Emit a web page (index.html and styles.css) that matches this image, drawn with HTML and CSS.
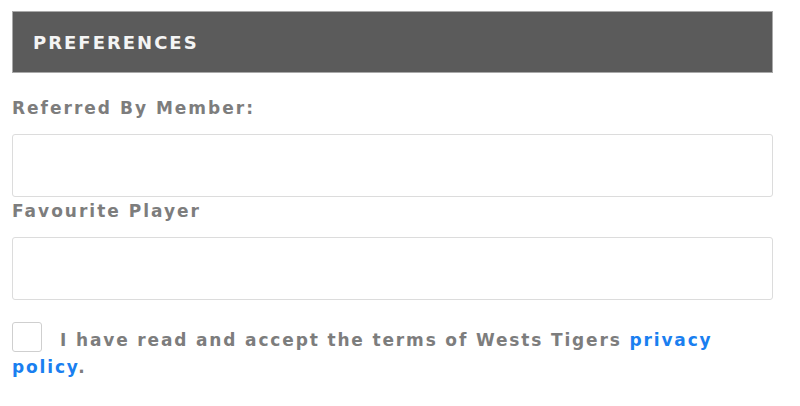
FILE: index.html
```html
<!DOCTYPE html>
<html>
<head>
<meta charset="utf-8">
<link rel="stylesheet" href="styles.css">
</head>
<body>
<div class="panel">
  <div class="panel-head">PREFERENCES</div>
  <div class="field">
    <label class="label">Referred By Member:</label>
    <div class="input"></div>
  </div>
  <div class="field field-tight">
    <label class="label">Favourite Player</label>
    <div class="input"></div>
  </div>
  <div class="agree">
    <span class="checkbox"></span><span class="agree-text">I have read and accept the terms of Wests Tigers <a class="link" href="#">privacy policy</a>.</span>
  </div>
</div>
</body>
</html>
```
FILE: styles.css
```css
html, body {
  margin: 0;
  padding: 0;
  background: #ffffff;
}
.panel {
  width: 761px;
  padding: 11px 0 0 12px;
  font-family: "DejaVu Sans", sans-serif;
  font-weight: bold;
  color: #7d7d7d;
}
.panel-head {
  box-sizing: border-box;
  border: 1px solid #a9a9a9;
  background: #5b5b5b;
  color: #f4f4f4;
  font-size: 18px;
  letter-spacing: 2px;
  padding-left: 20px;
  display: flex;
  align-items: center;
  height: 62px;
}
.field {
  margin-top: 24px;
}
.field-tight {
  margin-top: 3px;
}
.label {
  display: block;
  font-size: 17px;
  letter-spacing: 2px;
  line-height: 22px;
}
.input {
  margin-top: 15px;
  height: 63px;
  box-sizing: border-box;
  border: 1px solid #dcdcdc;
  border-radius: 3px;
  background: #fff;
}
.agree {
  margin-top: 22px;
  font-size: 17px;
  letter-spacing: 1.85px;
  line-height: 27px;
}
.checkbox {
  display: inline-block;
  width: 30px;
  height: 30px;
  box-sizing: border-box;
  border: 1px solid #cfcfcf;
  border-radius: 3px;
  vertical-align: -6px;
  margin-right: 18px;
}
.link {
  color: #1a7ff0;
  text-decoration: none;
}
```
